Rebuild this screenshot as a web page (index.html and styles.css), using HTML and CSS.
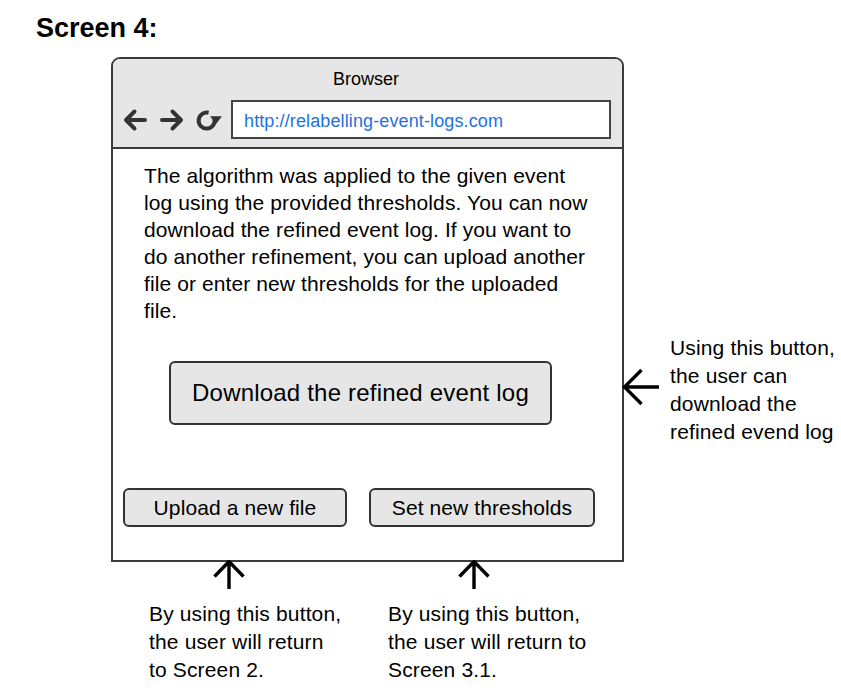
FILE: index.html
```html
<!DOCTYPE html>
<html>
<head>
<meta charset="utf-8">
<link rel="stylesheet" href="styles.css">
</head>
<body>
<div class="page">
  <h1 class="title">Screen 4:</h1>
  <div class="diagram">
    <div class="main">
      <div class="browser">
        <div class="chrome">
          <div class="chrome-title">Browser</div>
          <div class="navrow">
            <svg class="nav-icon" viewBox="0 0 25 26" width="25" height="26"><path d="M3 13 H22 M11.5 4.5 L3 13 L11.5 21.5" fill="none" stroke="#333" stroke-width="4" stroke-linecap="round" stroke-linejoin="round"/></svg>
            <svg class="nav-icon" viewBox="0 0 25 26" width="25" height="26"><path d="M22 13 H3 M13.5 4.5 L22 13 L13.5 21.5" fill="none" stroke="#333" stroke-width="4" stroke-linecap="round" stroke-linejoin="round"/></svg>
            <svg class="nav-icon reload" viewBox="0 0 27 26" width="27" height="26"><path d="M13.6 5.8 A8 8 0 1 0 19.5 12" fill="none" stroke="#333" stroke-width="4"/><path d="M15 9.2 L27 9.2 L21 17 Z" fill="#333"/></svg>
            <div class="url">http://relabelling-event-logs.com</div>
          </div>
        </div>
        <div class="content">
          <p class="message">The algorithm was applied to the given event log using the provided thresholds. You can now download the refined event log. If you want to do another refinement, you can upload another file or enter new thresholds for the uploaded file.</p>
          <div class="btn btn-large">Download the refined event log</div>
          <div class="btn-row">
            <div class="btn btn-upload">Upload a new file</div>
            <div class="btn btn-thresh">Set new thresholds</div>
          </div>
        </div>
      </div>
      <div class="notes">
        <div class="note note-one">
          <svg class="up-arrow" viewBox="0 0 32 38" width="32" height="38"><path d="M16 1.5 V29 M1.5 16.5 L16 1.5 L30.5 16.5" fill="none" stroke="#000" stroke-width="3.4"/></svg>
          <div class="note-text">By using this button,<br>the user will return<br>to Screen 2.</div>
        </div>
        <div class="note note-two">
          <svg class="up-arrow" viewBox="0 0 32 38" width="32" height="38"><path d="M16 1.5 V29 M1.5 16.5 L16 1.5 L30.5 16.5" fill="none" stroke="#000" stroke-width="3.4"/></svg>
          <div class="note-text">By using this button,<br>the user will return to<br>Screen 3.1.</div>
        </div>
      </div>
    </div>
    <div class="side">
      <svg class="left-arrow" viewBox="0 0 40 40" width="40" height="40"><path d="M2.5 19 H37 M19.5 2 L2.5 19 L19.5 36" fill="none" stroke="#000" stroke-width="3.4"/></svg>
      <div class="note-text">Using this button,<br>the user can<br>download the<br>refined evend log</div>
    </div>
  </div>
</div>
</body>
</html>
```

FILE: styles.css
```css
body {
  margin: 0;
  background: #ffffff;
  color: #000000;
  font-family: "Liberation Sans", Arial, sans-serif;
}

.page {
  padding: 12px 0 0 36px;
}

.title {
  margin: 0;
  font-size: 27px;
  font-weight: bold;
  line-height: 32px;
}

.diagram {
  display: flex;
  align-items: flex-start;
  margin-top: 13px;
  margin-left: 75px;
}

.main {
  display: flex;
  flex-direction: column;
}

.browser {
  width: 513px;
  height: 505px;
  box-sizing: border-box;
  border: 2px solid #3a3a3a;
  border-radius: 9px 9px 0 0;
  display: flex;
  flex-direction: column;
  overflow: hidden;
}

.chrome {
  height: 90px;
  box-sizing: border-box;
  background: #e6e6e6;
  border-bottom: 2px solid #3a3a3a;
  padding-top: 10px;
}

.chrome-title {
  text-align: center;
  font-size: 18px;
  line-height: 20px;
  padding-right: 3px;
}

.navrow {
  display: flex;
  align-items: center;
  gap: 11px;
  margin-top: 11px;
  padding-left: 10px;
}

.nav-icon {
  display: block;
  margin-top: 1px;
}

.reload {
  margin-right: -2px;
}

.url {
  width: 380px;
  height: 39px;
  box-sizing: border-box;
  background: #ffffff;
  border: 2px solid #444444;
  padding: 4px 0 0 11px;
  font-size: 18px;
  line-height: 31px;
  letter-spacing: 0.12px;
  color: #1f6fe5;
}

.content {
  flex: 1;
  background: #ffffff;
  padding: 13px 0 0 10px;
  display: flex;
  flex-direction: column;
  align-items: flex-start;
}

.message {
  margin: 0 0 0 21px;
  width: 447px;
  font-size: 21px;
  line-height: 27px;
  letter-spacing: 0.1px;
}

.btn {
  box-sizing: border-box;
  background: #e6e6e6;
  border: 2px solid #333333;
  border-radius: 6px;
  display: flex;
  align-items: center;
  justify-content: center;
  font-size: 21px;
  letter-spacing: 0.1px;
}

.btn-large {
  margin: 37px 0 0 46px;
  width: 383px;
  height: 64px;
  font-size: 24px;
  letter-spacing: 0.2px;
}

.btn-row {
  display: flex;
  gap: 22px;
  margin-top: 63px;
}

.btn-upload {
  width: 224px;
  height: 39px;
}

.btn-thresh {
  width: 226px;
  height: 39px;
}

.notes {
  display: flex;
  margin-left: 38px;
}

.note {
  display: flex;
  flex-direction: column;
  align-items: flex-start;
}

.note-one {
  width: 239px;
}

.note-one .up-arrow {
  margin-left: 64px;
}

.note-two .up-arrow {
  margin-left: 70px;
}

.up-arrow {
  display: block;
  margin-top: -2px;
}

.note-text {
  font-size: 21px;
  line-height: 28px;
  letter-spacing: 0.15px;
  white-space: nowrap;
}

.note .note-text {
  margin-top: 2px;
}

.side {
  display: flex;
  align-items: center;
  gap: 8px;
  margin-top: 277px;
  margin-left: -2px;
}

.left-arrow {
  display: block;
  margin-top: -4px;
}
```
